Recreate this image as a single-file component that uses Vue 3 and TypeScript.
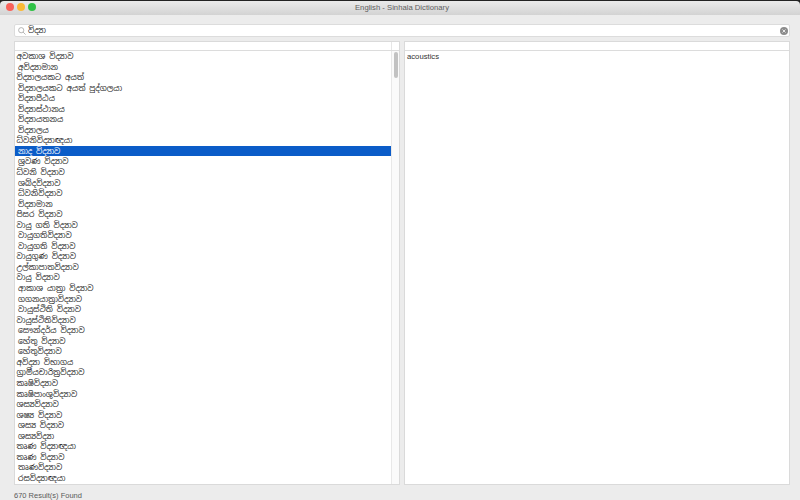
<script setup lang="ts">
const rawItems: string[] = [
  'අවකාශ විද්‍යාව',' අවිද්‍යාමාන','විද්‍යාලයකට අයත්',' විද්‍යාලයකට අයත් පුද්ගලයා',' විද්‍යාපීඨය',' විද්‍යාස්ථානය',' විද්‍යායතනය',' විද්‍යාලය','ධ්වනිවිද්‍යාඥයා',
  ' නාද විද්‍යාව',' ශ්‍රවණ විද්‍යාව','ධ්වනි විද්‍යාව',' ශබ්දවිද්‍යාව',' ධ්වනිවිද්‍යාව',' විද්‍යාමාන','පිසර විද්‍යාව','වායු ගති විද්‍යාව',' වායුගතිවිද්‍යාව',' වායුගති විද්‍යාව','වායුගුණ විද්‍යාව','උල්කාපාතවිද්‍යාව','වායු විද්‍යාව',' ආකාශ යාත්‍රා විද්‍යාව',' ගගනයාත්‍රාවිද්‍යාව',' වායුස්ථිති විද්‍යාව','වායුස්ථිතිවිද්‍යාව',' සෞන්දර්ය විද්‍යාව',' හේතු විද්‍යාව',' හේතුවිද්‍යාව','අවිද්‍යා විභාගය','ග්‍රාමීයචාරිත්‍රවිද්‍යාව','කෘෂිවිද්‍යාව','කෘෂිපාංශුවිද්‍යාව','ශස්‍යවිද්‍යාව','ශෂ්‍ය විද්‍යාව',' ශස්‍ය විද්‍යාව',' ශස්‍යවිද්‍යා','තෘණ විද්‍යාඥයා','තෘණ විද්‍යාව',' තෘණවිද්‍යාව',' රසවිද්‍යාඥයා'
]
const items = rawItems.map((t) => ({ text: t.trim(), indent: t.startsWith(' ') }))
const selected = 9
</script>

<template>
  <div class="window">
    <header class="titlebar">
      <div class="lights">
        <span class="light red"></span>
        <span class="light yellow"></span>
        <span class="light green"></span>
      </div>
      <span class="title">English - Sinhala Dictionary</span>
    </header>
    <main class="content">
      <div class="search">
        <svg class="glass" width="8" height="8" viewBox="0 0 8 8" fill="none" stroke="#9a9a9a" stroke-width="0.7">
          <circle cx="3.2" cy="3.2" r="2.6" />
          <path d="M5.100 5.100l2.500 2.500" />
        </svg>
        <span class="query">විද්‍යා</span>
        <svg class="clear" width="8" height="8" viewBox="0 0 8 8">
          <circle cx="4" cy="4" r="4" fill="#8c8c8c" />
          <path d="M2.500 2.500l3 3M5.500 2.500l-3 3" stroke="#f2f2f2" stroke-width="0.9" />
        </svg>
      </div>
      <div class="panes">
        <section class="pane left">
          <div class="pane-head"><span class="head-end"></span></div>
          <div class="pane-body">
            <ul class="list">
              <li
                v-for="(item, i) in items"
                :key="i"
                class="row"
                :class="{ selected: i === selected, indent: item.indent }"
              >{{ item.text }}</li>
            </ul>
            <div class="track"><div class="thumb"></div></div>
          </div>
        </section>
        <section class="pane right">
          <div class="pane-head"></div>
          <div class="detail">acoustics</div>
        </section>
      </div>
      <footer class="status">670 Result(s) Found</footer>
    </main>
  </div>
</template>

<style>
html, body { margin: 0; height: 100%; overflow: hidden; }
</style>

<style scoped>
.window {
  width: 800px;
  height: 500px;
  display: flex;
  flex-direction: column;
  background: #222;
  font-family: "Noto Sans Sinhala", "Liberation Sans", sans-serif;
  overflow: hidden;
}
.titlebar {
  height: 14px;
  flex: none;
  display: flex;
  align-items: center;
  justify-content: center;
  position: relative;
  margin-top: 1px;
  padding: 0 0 1px 4px;
  box-sizing: border-box;
  border-radius: 4px 4px 0 0;
  background: linear-gradient(#eaeaea, #d3d3d3);
}
.lights {
  position: absolute;
  left: 6px;
  top: 2px;
  display: flex;
  gap: 3px;
}
.light { width: 8px; height: 8px; border-radius: 50%; }
.red { background: #f9625a; }
.yellow { background: #fbba36; }
.green { background: #2fc246; }
.title { font: 7.7px "Liberation Sans", sans-serif; color: #5f5f5f; }
.content {
  flex: 1;
  min-height: 0;
  display: flex;
  flex-direction: column;
  padding: 9px 10px 0 14px;
  background: #ececec;
}
.search {
  height: 11px;
  flex: none;
  display: flex;
  align-items: center;
  gap: 2px;
  padding: 0 1px 0 3px;
  background: #fff;
  border: 1px solid #dcdcdc;
  border-radius: 2px;
}
.query { flex: 1; font-size: 7.7px; color: #222; line-height: 11px; }
.glass, .clear { flex: none; }
.panes {
  display: flex;
  gap: 4px;
  flex: 1;
  min-height: 0;
  margin-top: 4px;
}
.pane {
  display: flex;
  flex-direction: column;
  background: #fff;
  border: 1px solid #dadada;
  min-width: 0;
}
.left { width: 386px; flex: none; box-sizing: border-box; }
.right { flex: 1; }
.pane-head {
  height: 8px;
  flex: none;
  border-bottom: 1px solid #dcdcdc;
  display: flex;
  justify-content: flex-end;
}
.head-end { width: 8px; border-left: 1px solid #e6e6e6; box-sizing: border-box; }
.pane-body { flex: 1; min-height: 0; display: flex; overflow: hidden; }
.list {
  flex: 1;
  margin: 0;
  padding: 0;
  list-style: none;
  overflow: hidden;
  min-width: 0;
}
.row {
  height: 10.55px;
  line-height: 10.55px;
  font-size: 7.7px;
  color: #1c1c1c;
  padding-left: 1.500px;
  white-space: nowrap;
  overflow: hidden;
}
.indent { padding-left: 3px; }
.selected { background: #0b5cc8; color: #fff; }
.track {
  width: 8px;
  flex: none;
  background: #fafafa;
  border-left: 1px solid #e8e8e8;
  box-sizing: border-box;
  padding-top: 1px;
  display: flex;
  justify-content: center;
}
.thumb { width: 4px; height: 26px; border-radius: 2px; background: #c2c2c2; }
.detail { padding: 1px 2px; font: 7.7px/10.5px "Liberation Sans", sans-serif; color: #333; }
.status {
  height: 15px;
  flex: none;
  display: flex;
  align-items: center;
  font: 7.5px "Liberation Sans", sans-serif;
  color: #5a5a5a;
  padding-top: 5px;
  box-sizing: border-box;
}
</style>
